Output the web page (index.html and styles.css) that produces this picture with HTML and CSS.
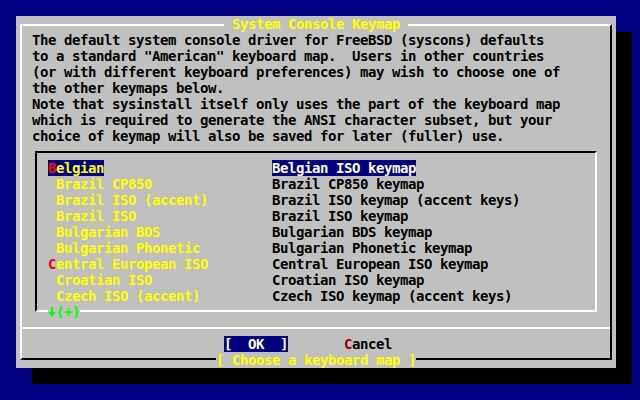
FILE: index.html
```html
<!DOCTYPE html>
<html>
<head>
<meta charset="utf-8">
<link rel="stylesheet" href="styles.css">
</head>
<body>
<div class="screen">
  <div class="dialog">
    <div class="frame">
      <div class="row title-row"><span class="title"> System Console Keymap </span></div>
      <div class="text">
        <div class="row">The default system console driver for FreeBSD (syscons) defaults</div>
        <div class="row">to a standard "American" keyboard map.  Users in other countries</div>
        <div class="row">(or with different keyboard preferences) may wish to choose one of</div>
        <div class="row">the other keymaps below.</div>
        <div class="row">Note that sysinstall itself only uses the part of the keyboard map</div>
        <div class="row">which is required to generate the ANSI character subset, but your</div>
        <div class="row">choice of keymap will also be saved for later (fuller) use.</div>
      </div>
      <div class="listbox">
        <div class="item selected"><span class="name"><span class="hot">B</span>elgian</span><span class="desc">Belgian ISO keymap</span></div>
        <div class="item"><span class="name"> Brazil CP850</span><span class="desc">Brazil CP850 keymap</span></div>
        <div class="item"><span class="name"> Brazil ISO (accent)</span><span class="desc">Brazil ISO keymap (accent keys)</span></div>
        <div class="item"><span class="name"> Brazil ISO</span><span class="desc">Brazil ISO keymap</span></div>
        <div class="item"><span class="name"> Bulgarian BDS</span><span class="desc">Bulgarian BDS keymap</span></div>
        <div class="item"><span class="name"> Bulgarian Phonetic</span><span class="desc">Bulgarian Phonetic keymap</span></div>
        <div class="item"><span class="name"><span class="hot">C</span>entral European ISO</span><span class="desc">Central European ISO keymap</span></div>
        <div class="item"><span class="name"> Croatian ISO</span><span class="desc">Croatian ISO keymap</span></div>
        <div class="item"><span class="name"> Czech ISO (accent)</span><span class="desc">Czech ISO keymap (accent keys)</span></div>
        <div class="row more"><span class="indicator"><svg class="arrow" width="8" height="16" viewBox="0 0 8 16"><rect x="3" y="3" width="2" height="8" fill="#00ff00"/><polygon points="0,8 8,8 4,13" fill="#00ff00"/></svg><span>(+)</span></span></div>
      </div>
      <div class="separator"></div>
      <div class="row buttons"><span class="btn btn-active">[  OK  ]</span>       <span class="btn"><span class="btn-hot">C</span>ancel</span></div>
      <div class="row footer"><span class="label">[ Choose a keyboard map ]</span></div>
    </div>
  </div>
</div>
</body>
</html>
```
FILE: styles.css
```css
html, body {
  margin: 0;
  padding: 0;
}

body {
  width: 640px;
  height: 400px;
  background: #000080;
  overflow: hidden;
  font-family: "DejaVu Sans Mono", "Liberation Mono", monospace;
  font-weight: bold;
  font-size: 14px;
  letter-spacing: -0.4287px;
  line-height: 16px;
  color: #000;
}

.screen {
  padding: 16px 0 0 16px;
}

.dialog {
  width: 600px;
  box-sizing: border-box;
  padding: 8px 4px;
  background: #c0c0c0;
  box-shadow: 16px 16px 0 #000;
}

.frame {
  border-top: 2px solid #fff;
  border-left: 2px solid #fff;
  border-right: 2px solid #000;
  border-bottom: 2px solid #000;
  display: flex;
  flex-direction: column;
}

.row {
  height: 16px;
  white-space: pre;
}

.title-row {
  margin-top: -10px;
  padding-left: 202px;
}

.title {
  background: #c0c0c0;
  color: #ffff00;
}

.text {
  padding-left: 10px;
}

.listbox {
  margin: 7px 0 0 13px;
  width: 562px;
  box-sizing: border-box;
  border-top: 2px solid #000;
  border-left: 2px solid #000;
  border-right: 2px solid #fff;
  border-bottom: 2px solid #fff;
  padding: 7px 0 0 11px;
}

.item {
  display: grid;
  grid-template-columns: 224px 1fr;
  height: 16px;
  white-space: pre;
}

.name {
  justify-self: start;
  color: #ffff00;
}

.desc {
  justify-self: start;
  color: #000;
}

.hot {
  color: #ff0000;
}

.selected .name {
  background: #000080;
}

.selected .desc {
  background: #000080;
  color: #fff;
}

.more {
  margin-bottom: -10px;
}

.indicator {
  display: inline-flex;
  height: 16px;
  background: #c0c0c0;
  color: #00ff00;
}

.arrow {
  display: block;
  width: 8px;
  height: 16px;
}

.separator {
  height: 2px;
  background: #fff;
  margin-top: 15px;
}

.buttons {
  margin-top: 7px;
  padding-left: 202px;
}

.btn-active {
  background: #000080;
  color: #fff;
}

.btn-hot {
  color: #a00000;
}

.footer {
  padding-left: 194px;
  margin-bottom: -10px;
}

.label {
  background: #c0c0c0;
  color: #ffff00;
}
```
